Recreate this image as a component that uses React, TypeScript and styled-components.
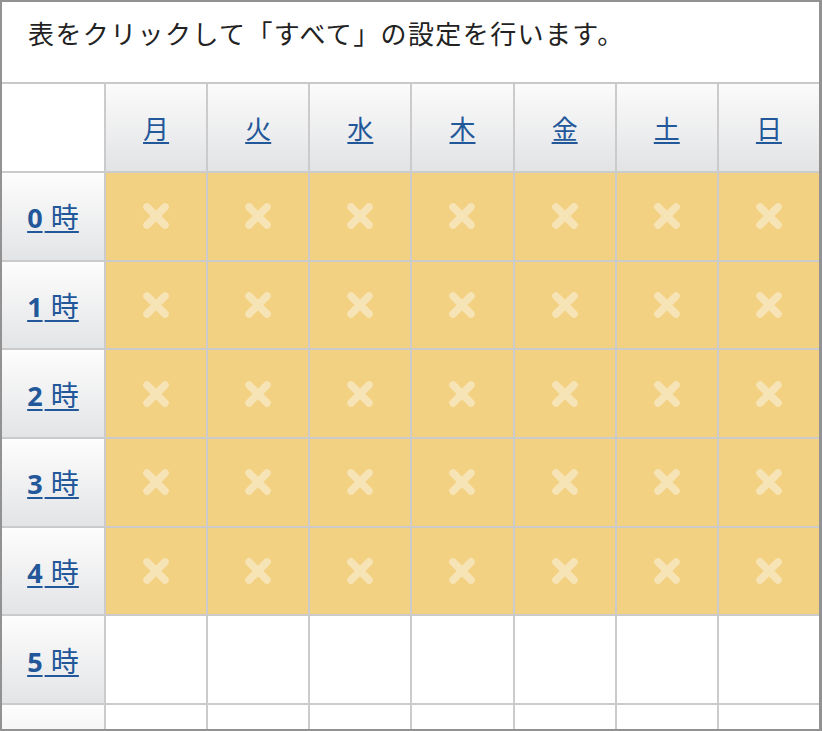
import React from "react";
import styled, { createGlobalStyle } from "styled-components";

const Global = createGlobalStyle`
  html, body { margin: 0; padding: 0; background: #ffffff; }
  body { font-family: "Noto Sans CJK JP", "Noto Sans", sans-serif; }
`;

const Frame = styled.div`
  box-sizing: border-box;
  width: 822px;
  height: 731px;
  border: 2px solid #929292;
  border-right-width: 3px;
  overflow: hidden;
  background: #ffffff;
  display: flex;
  flex-direction: column;
`;

const Caption = styled.div`
  flex: 0 0 82px;
  display: flex;
  align-items: flex-start;
  padding: 12px 0 0 26px;
  box-sizing: border-box;
  font-size: 26px;
  letter-spacing: 1.4px;
  color: #222222;
  border-bottom: 2px solid #c9c9c9;
`;

const Grid = styled.div`
  display: grid;
  grid-template-columns: 102px repeat(7, 1fr);
  grid-template-rows: 87px repeat(7, 86.67px);
  gap: 2px;
  background: #cbcbcb;
  flex: 0 0 auto;
`;

const Corner = styled.div`
  background: #ffffff;
`;

const DayHead = styled.div`
  background: linear-gradient(#fbfbfb, #e2e3e5);
  display: flex;
  align-items: center;
  justify-content: center;
`;

const HourHead = styled.div`
  background: linear-gradient(#fdfdfd, #e3e4e6);
  display: flex;
  align-items: center;
  justify-content: center;
`;

const Link = styled.a<{ $size?: number }>`
  color: #22579a;
  font-size: ${(p) => p.$size ?? 26}px;
  text-decoration: underline;
  text-decoration-thickness: 2px;
  text-underline-offset: 3px;
  cursor: pointer;
`;

const Num = styled.span`
  font-family: "Noto Sans", "Liberation Sans", sans-serif;
  font-weight: 700;
  font-size: 27px;
  margin-right: 2px;
`;

const Cell = styled.div<{ $on: boolean }>`
  background: ${(p) => (p.$on ? "#f3d182" : "#ffffff")};
  display: flex;
  align-items: center;
  justify-content: center;
`;

const Cross = () => (
  <svg width="30" height="30" viewBox="0 0 30 30">
    <path
      d="M6 6 L24 24 M24 6 L6 24"
      stroke="#f7e4b6"
      strokeWidth="7.5"
      strokeLinecap="round"
    />
  </svg>
);

const days = ["月", "火", "水", "木", "金", "土", "日"];
const hours = [0, 1, 2, 3, 4, 5, 6];

export default function App() {
  return (
    <>
      <Global />
      <Frame>
        <Caption>表をクリックして「すべて」の設定を行います。</Caption>
        <Grid>
          <Corner />
          {days.map((d) => (
            <DayHead key={d}>
              <Link>{d}</Link>
            </DayHead>
          ))}
          {hours.map((h) => (
            <React.Fragment key={h}>
              <HourHead>
                {h < 6 && (
                  <Link $size={28}>
                    <Num>{h}</Num> 時
                  </Link>
                )}
              </HourHead>
              {days.map((d) => (
                <Cell key={d} $on={h < 5}>
                  {h < 5 && <Cross />}
                </Cell>
              ))}
            </React.Fragment>
          ))}
        </Grid>
      </Frame>
    </>
  );
}
